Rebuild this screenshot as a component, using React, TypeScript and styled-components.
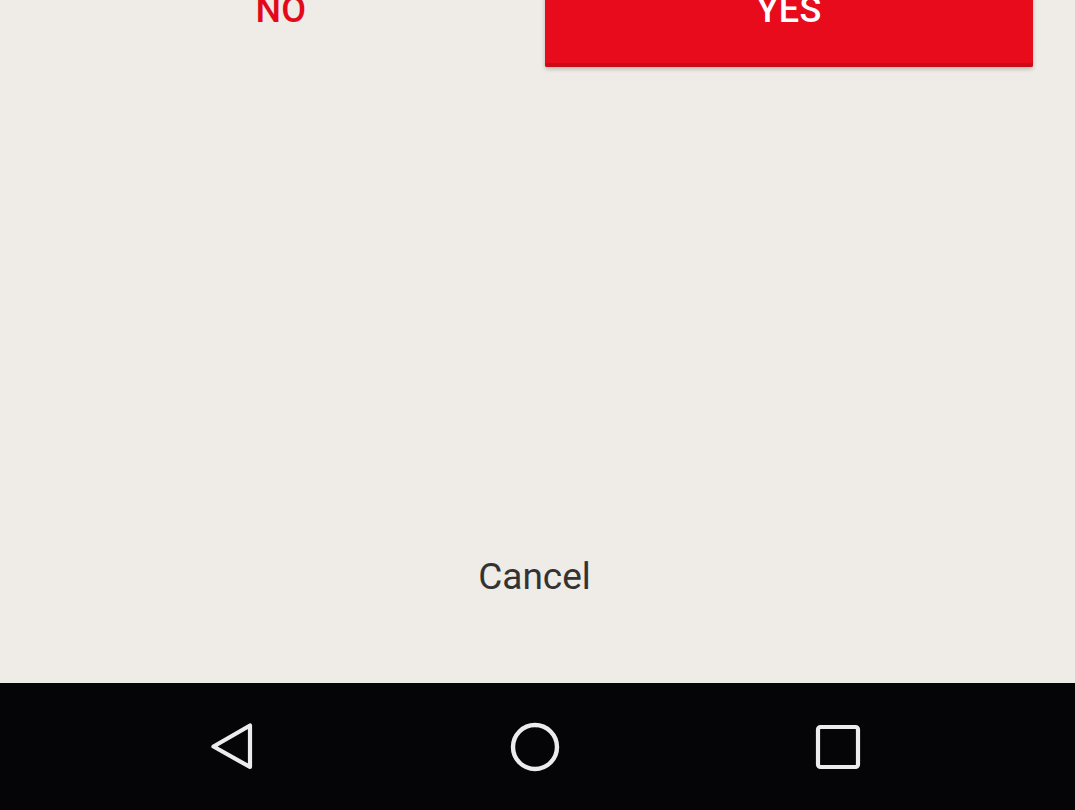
import styled, { createGlobalStyle } from "styled-components";

const GlobalStyle = createGlobalStyle`
  html, body {
    margin: 0;
    padding: 0;
    background: #efebe6;
    overflow: hidden;
  }
  body {
    font-family: Roboto, "Noto Sans", "Liberation Sans", sans-serif;
  }
`;

const Screen = styled.div`
  width: 1075px;
  height: 810px;
  display: flex;
  flex-direction: column;
  overflow: hidden;
`;

const Content = styled.main`
  flex: 1;
  display: flex;
  flex-direction: column;
  background: #efebe6;
`;

const ButtonRow = styled.div`
  display: grid;
  grid-template-columns: 1fr 1fr;
  gap: 15px;
  padding: 0 42px;
  margin-top: -48px;
  height: 115px;
`;

const ActionButton = styled.button<{ $primary?: boolean }>`
  border: none;
  border-radius: 2px;
  display: flex;
  align-items: center;
  justify-content: center;
  padding: 0 ${(p) => (p.$primary ? "0" : "10px")} 0 0;
  font-family: Roboto, "Liberation Sans", sans-serif;
  font-size: 36px;
  font-weight: 500;
  letter-spacing: 0.3px;
  cursor: pointer;
  color: ${(p) => (p.$primary ? "#ffffff" : "#e20a1a")};
  background: ${(p) => (p.$primary ? "#e80b1c" : "transparent")};
  box-shadow: ${(p) =>
    p.$primary
      ? "inset 0 -4px 0 #c90c18, 0 2px 4px rgba(0, 0, 0, 0.22)"
      : "none"};
`;

const CancelLink = styled.div`
  margin-top: auto;
  margin-bottom: 88px;
  padding-right: 6px;
  text-align: center;
  font-size: 37px;
  line-height: 36px;
  color: #333333;
`;

const NavBar = styled.nav`
  height: 127px;
  background: #050507;
  display: flex;
  align-items: center;
  justify-content: center;
  gap: 243px;
  padding-right: 5px;
`;

const NavIcon = styled.svg`
  width: 60px;
  height: 60px;
  display: block;
`;

function App() {
  return (
    <Screen>
      <GlobalStyle />
      <Content>
        <ButtonRow>
          <ActionButton>NO</ActionButton>
          <ActionButton $primary>YES</ActionButton>
        </ButtonRow>
        <CancelLink>Cancel</CancelLink>
      </Content>
      <NavBar>
        <NavIcon viewBox="0 0 60 60">
          <path
            d="M48 8.5 L48 50 L11.5 29.5 Z"
            fill="none"
            stroke="#ececec"
            strokeWidth="4.2"
            strokeLinejoin="round"
          />
        </NavIcon>
        <NavIcon viewBox="0 0 60 60">
          <circle cx="30" cy="30" r="22" fill="none" stroke="#ececec" strokeWidth="4.4" />
        </NavIcon>
        <NavIcon viewBox="0 0 60 60">
          <rect
            x="10"
            y="10"
            width="40"
            height="40"
            rx="2.5"
            fill="none"
            stroke="#ececec"
            strokeWidth="4.2"
          />
        </NavIcon>
      </NavBar>
    </Screen>
  );
}

export default App;
